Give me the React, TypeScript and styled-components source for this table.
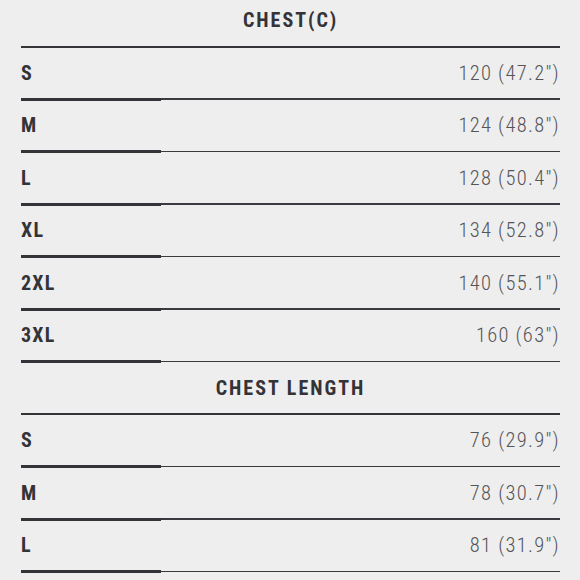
import React from 'react'
import styled, { createGlobalStyle } from 'styled-components'

const GlobalStyle = createGlobalStyle`
  html, body {
    margin: 0;
    padding: 0;
    background: #eeeeee;
  }
  body {
    font-family: Roboto, "Liberation Sans", sans-serif;
    font-stretch: 75%;
  }
`

interface SizeRow {
  size: string
  value: string
}

const sections: { title: string; rows: SizeRow[] }[] = [
  {
    title: 'CHEST(C)',
    rows: [
      { size: 'S', value: '120 (47.2")' },
      { size: 'M', value: '124 (48.8")' },
      { size: 'L', value: '128 (50.4")' },
      { size: 'XL', value: '134 (52.8")' },
      { size: '2XL', value: '140 (55.1")' },
      { size: '3XL', value: '160 (63")' },
    ],
  },
  {
    title: 'CHEST LENGTH',
    rows: [
      { size: 'S', value: '76 (29.9")' },
      { size: 'M', value: '78 (30.7")' },
      { size: 'L', value: '81 (31.9")' },
    ],
  },
]

const Page = styled.div`
  width: 539px;
  margin: -4.5px auto 0 21px;
`

const SectionTitle = styled.h2`
  margin: 0;
  height: 49.5px;
  display: flex;
  align-items: center;
  justify-content: center;
  font-size: 20px;
  font-weight: 700;
  letter-spacing: 2px;
  color: #333338;
`

const Row = styled.div`
  height: 49.5px;
  display: flex;
  align-items: center;
  justify-content: space-between;
`

const Size = styled.span`
  font-size: 20px;
  font-weight: 700;
  letter-spacing: 1.2px;
  color: #333338;
`

const Value = styled.span`
  font-size: 20.5px;
  font-weight: 300;
  letter-spacing: 1.3px;
  color: #555557;
`

const Divider = styled.div`
  height: 3px;
  display: flex;
  align-items: center;
`

const Thick = styled.div<{ $full?: boolean }>`
  ${(p) => (p.$full ? 'flex: 1; height: 2px;' : 'width: 140px; height: 3px;')}
  background: #333338;
`

const Thin = styled.div`
  flex: 1;
  height: 1.5px;
  background: #3a3a3e;
`

export default function App() {
  return (
    <>
      <GlobalStyle />
      <Page>
        {sections.map((section) => (
          <section key={section.title}>
            <SectionTitle>{section.title}</SectionTitle>
            <Divider>
              <Thick $full />
            </Divider>
            {section.rows.map((row) => (
              <React.Fragment key={row.size}>
                <Row>
                  <Size>{row.size}</Size>
                  <Value>{row.value}</Value>
                </Row>
                <Divider>
                  <Thick />
                  <Thin />
                </Divider>
              </React.Fragment>
            ))}
          </section>
        ))}
      </Page>
    </>
  )
}
